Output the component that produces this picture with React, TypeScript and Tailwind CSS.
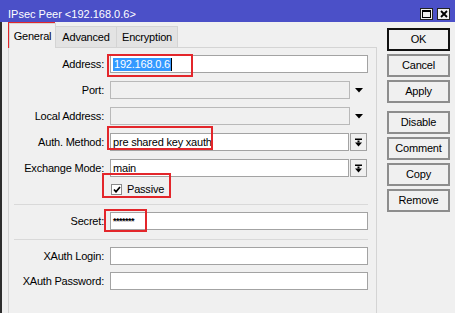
import React from 'react';

const Triangle = () => (
  <svg width="8" height="5" viewBox="0 0 8 5">
    <polygon points="0,0 8,0 4,4.5" fill="#000" />
  </svg>
);

const DropIcon = () => (
  <svg width="9" height="9" viewBox="0 0 9 9">
    <rect x="1" y="0.5" width="7" height="1.5" fill="#000" />
    <rect x="3.5" y="2.5" width="2" height="2" fill="#000" />
    <polygon points="1,4.5 8,4.5 4.5,8.5" fill="#000" />
  </svg>
);

const Label = ({ text }: { text: string }) => (
  <div className="w-[96px] shrink-0 pr-[1px] text-right text-[11px] tracking-[-0.2px] text-black">{text}</div>
);

const Row = ({ label, children }: { label: string; children: React.ReactNode }) => (
  <div className="flex h-[18px] items-center">
    <Label text={label} />
    <div className="ml-[5px] flex h-full flex-1 items-stretch">{children}</div>
  </div>
);

const TextBox = ({ children }: { children?: React.ReactNode }) => (
  <div className="flex flex-1 items-center border border-[#a3a3a3] bg-white px-[2px] text-[11px] tracking-[-0.2px] text-black">
    {children}
  </div>
);

const ComboRow = ({ label, value }: { label: string; value: string }) => (
  <Row label={label}>
    <TextBox>{value}</TextBox>
    <div className="ml-[1px] mr-[1px] flex w-[17px] items-center justify-center border border-[#a3a3a3] bg-[#f0f0f0]">
      <DropIcon />
    </div>
  </Row>
);

const DisabledRow = ({ label }: { label: string }) => (
  <Row label={label}>
    <div className="flex-1 border border-[#b9b9b9] bg-[#f0f0f0]" />
    <div className="flex w-[18px] items-center justify-center">
      <Triangle />
    </div>
  </Row>
);

const Btn = ({ text, primary }: { text: string; primary?: boolean }) => (
  <div
    className={
      primary
        ? 'flex h-[23px] items-center justify-center border-2 border-[#111] bg-[#f0f0f0] text-[11px] tracking-[-0.2px] text-black'
        : 'flex h-[23px] items-center justify-center border-2 border-[#8d8d8d] bg-[#f0f0f0] text-[11px] tracking-[-0.2px] text-black'
    }
  >
    {text}
  </div>
);

const Annot = ({ className }: { className: string }) => (
  <div className={'pointer-events-none absolute border-2 border-[#e3262b] ' + className} />
);

export default function App() {
  return (
    <div className="relative flex h-[313px] w-[455px] flex-col overflow-hidden bg-[#f0f0f0] font-['Liberation_Sans',Arial,sans-serif]">
      {/* Title bar */}
      <div className="flex h-[22px] shrink-0 items-start bg-[#4b50c8]">
        <span className="ml-[8px] mt-[9px] text-[11px] leading-[11px] text-white">IPsec Peer &lt;192.168.0.6&gt;</span>
        <div className="ml-auto mr-[5px] mt-[8px] flex gap-[4px]">
          <div className="flex h-[12px] w-[13px] items-center justify-center border border-[#222] bg-[#f0f0f0]">
            <svg width="9" height="8" viewBox="0 0 9 8">
              <rect x="0.5" y="0.5" width="8" height="7" fill="none" stroke="#000" />
              <rect x="0.5" y="0.5" width="8" height="1.5" fill="#000" />
            </svg>
          </div>
          <div className="flex h-[12px] w-[13px] items-center justify-center border border-[#222] bg-[#f0f0f0]">
            <svg width="8" height="8" viewBox="0 0 8 8">
              <path d="M1 1 L7 7 M7 1 L1 7" stroke="#000" strokeWidth="1.8" />
            </svg>
          </div>
        </div>
      </div>

      <div className="flex flex-1 border-l-2 border-[#2e2e2e]">
        {/* Tabs and panel */}
        <div className="ml-[6px] flex w-[369px] flex-col">
          <div className="mt-[1px] flex h-[24px] items-end pl-[1px] text-[11px] tracking-[-0.2px] text-black">
            <div className="relative z-10 -mb-px flex h-[25px] w-[47px] items-center justify-center border border-b-0 border-[#d4d4d4] bg-[#f0f0f0]">
              General
            </div>
            <div className="flex h-[21px] w-[61px] items-center justify-center border border-b-0 border-l-0 border-[#d4d4d4] bg-[#e3e3e3]">
              Advanced
            </div>
            <div className="flex h-[21px] w-[61px] items-center justify-center border border-b-0 border-l-0 border-[#d4d4d4] bg-[#e3e3e3]">
              Encryption
            </div>
          </div>
          <div className="flex flex-1 flex-col border border-b-0 border-[#d4d4d4] pr-[8px] pt-[7px]">
            <div className="flex flex-col gap-[8px]">
              <Row label="Address:">
                <TextBox>
                  <span className="bg-[#3399ff] px-px leading-[13px] text-white">192.168.0.6</span>
                  <span className="h-[13px] w-px bg-black" />
                </TextBox>
              </Row>
              <DisabledRow label="Port:" />
              <DisabledRow label="Local Address:" />
              <ComboRow label="Auth. Method:" value="pre shared key xauth" />
              <ComboRow label="Exchange Mode:" value="main" />
            </div>
            <div className="mt-[5px] flex h-[14px] items-center pl-[102px]">
              <div className="flex h-[11px] w-[11px] items-center justify-center border border-[#8a8a8a] bg-white">
                <svg width="8" height="7" viewBox="0 0 8 7">
                  <path d="M1 3.5 L3 5.8 L7 1" fill="none" stroke="#000" strokeWidth="1.7" />
                </svg>
              </div>
              <span className="ml-[5px] text-[11px] tracking-[-0.2px] text-black">Passive</span>
            </div>
            <div className="ml-[5px] mt-[8px] h-px bg-[#d9d9d9]" />
            <div className="mt-[7px]">
              <Row label="Secret:">
                <TextBox>
                  <span className="text-[9px] font-bold leading-[9px] tracking-[-0.5px]">*******</span>
                </TextBox>
              </Row>
            </div>
            <div className="ml-[5px] mt-[9px] h-px bg-[#d9d9d9]" />
            <div className="mt-[7px] flex flex-col gap-[7px]">
              <Row label="XAuth Login:">
                <TextBox />
              </Row>
              <Row label="XAuth Password:">
                <TextBox />
              </Row>
            </div>
          </div>
        </div>

        {/* Buttons */}
        <div className="ml-[10px] mt-[6px] flex w-[63px] flex-col">
          <div className="flex flex-col gap-[3px]">
            <Btn text="OK" primary />
            <Btn text="Cancel" />
            <Btn text="Apply" />
          </div>
          <div className="mt-[8px] flex flex-col gap-[3px]">
            <Btn text="Disable" />
            <Btn text="Comment" />
            <Btn text="Copy" />
            <Btn text="Remove" />
          </div>
        </div>
      </div>

      {/* Red annotation boxes */}
      <Annot className="left-[8px] top-[22px] h-[26px] w-[47px]" />
      <Annot className="left-[107px] top-[54px] h-[23px] w-[86px]" />
      <Annot className="left-[107px] top-[126px] h-[24px] w-[106px]" />
      <Annot className="left-[102px] top-[173px] h-[25px] w-[69px]" />
      <Annot className="left-[104px] top-[209px] h-[23px] w-[43px]" />
    </div>
  );
}
